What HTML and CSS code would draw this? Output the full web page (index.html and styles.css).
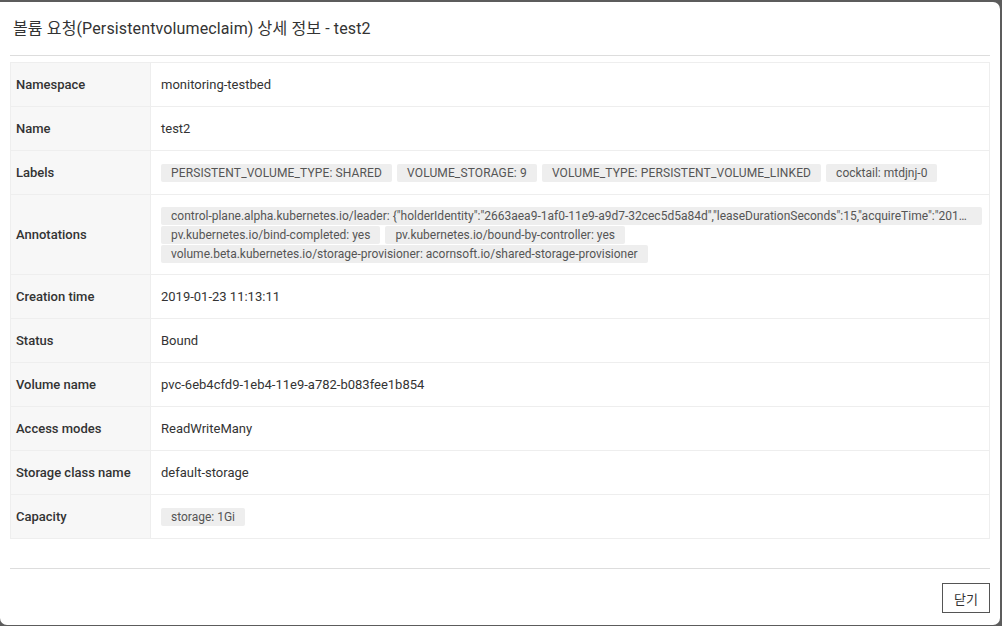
FILE: index.html
```html
<!DOCTYPE html>
<html lang="ko">
<head>
<meta charset="utf-8">
<link rel="stylesheet" href="styles.css">
</head>
<body>
<div class="backdrop">
  <div class="modal">
    <div class="modal-header">볼륨 요청(Persistentvolumeclaim) 상세 정보 - test2</div>
    <div class="modal-body">
      <div class="detail">
        <div class="row"><div class="th">Namespace</div><div class="td">monitoring-testbed</div></div>
        <div class="row"><div class="th">Name</div><div class="td">test2</div></div>
        <div class="row"><div class="th">Labels</div><div class="td tags">
          <span class="tag caps">PERSISTENT_VOLUME_TYPE: SHARED</span><span class="tag caps">VOLUME_STORAGE: 9</span><span class="tag caps">VOLUME_TYPE: PERSISTENT_VOLUME_LINKED</span><span class="tag">cocktail: mtdjnj-0</span>
        </div></div>
        <div class="row tall"><div class="th">Annotations</div><div class="td tags stack">
          <span class="tag ellip">control-plane.alpha.kubernetes.io/leader: {"holderIdentity":"2663aea9-1af0-11e9-a9d7-32cec5d5a84d","leaseDurationSeconds":15,"acquireTime":"2019-01-23T02:13:11Z","renewTime":"2019-01-23T02:13:13Z","leaderTransitions":0}</span>
          <div class="tagline"><span class="tag">pv.kubernetes.io/bind-completed: yes</span><span class="tag">pv.kubernetes.io/bound-by-controller: yes</span></div>
          <div class="tagline"><span class="tag">volume.beta.kubernetes.io/storage-provisioner: acornsoft.io/shared-storage-provisioner</span></div>
        </div></div>
        <div class="row"><div class="th">Creation time</div><div class="td">2019-01-23 11:13:11</div></div>
        <div class="row"><div class="th">Status</div><div class="td">Bound</div></div>
        <div class="row"><div class="th">Volume name</div><div class="td">pvc-6eb4cfd9-1eb4-11e9-a782-b083fee1b854</div></div>
        <div class="row"><div class="th">Access modes</div><div class="td">ReadWriteMany</div></div>
        <div class="row"><div class="th">Storage class name</div><div class="td">default-storage</div></div>
        <div class="row"><div class="th">Capacity</div><div class="td tags"><span class="tag">storage: 1Gi</span></div></div>
      </div>
    </div>
    <div class="modal-footer"><button class="btn">닫기</button></div>
  </div>
</div>
</body>
</html>
```

FILE: styles.css
```css
html, body {
  margin: 0;
  padding: 0;
  height: 100%;
}
body {
  background: #5c5c5c;
  font-family: Roboto, "Noto Sans CJK KR", sans-serif;
  color: #333;
  font-size: 13px;
}
.backdrop {
  padding: 2px 2px 1px 0;
  height: 100%;
  box-sizing: border-box;
}
.modal {
  background: #fff;
  border-radius: 0 7px 7px 7px;
  height: 100%;
  display: flex;
  flex-direction: column;
  padding: 0 10px 0 10px;
  box-sizing: border-box;
}
.modal-header {
  height: 53px;
  line-height: 54px;
  font-size: 16px;
  letter-spacing: 0.13px;
  color: #333;
  padding-left: 3px;
  border-bottom: 1px solid #ddd;
  flex: none;
}
.modal-body {
  padding-top: 6px;
  flex: none;
}
.detail {
  border: 1px solid #eee;
  border-bottom: none;
}
.row {
  display: flex;
  height: 44px;
  border-bottom: 1px solid #eee;
  box-sizing: border-box;
}
.row.tall {
  height: 80px;
}
.th {
  width: 140px;
  flex: none;
  background: #f7f7f7;
  border-right: 1px solid #eee;
  box-sizing: border-box;
  padding-left: 5px;
  display: flex;
  align-items: center;
  font-weight: 500;
  color: #333;
}
.td {
  flex: 1;
  min-width: 0;
  padding: 0 7px 0 10px;
  display: flex;
  align-items: center;
  color: #333;
}
.tags {
  flex-wrap: wrap;
}
.stack {
  flex-direction: column;
  align-items: flex-start;
  justify-content: center;
  gap: 1px;
}
.tagline {
  display: flex;
}
.tag {
  display: inline-block;
  background: #eee;
  color: #555;
  font-size: 12px;
  line-height: 18px;
  height: 18px;
  padding: 0 10px;
  margin-right: 5px;
  border-radius: 2px;
  white-space: nowrap;
}
.tag.caps {
  letter-spacing: 0.13px;
}
.ellip {
  max-width: 100%;
  overflow: hidden;
  text-overflow: ellipsis;
  box-sizing: border-box;
  margin-right: 0;
}
.modal-footer {
  margin-top: 29px;
  border-top: 1px solid #ddd;
  display: flex;
  justify-content: flex-end;
  padding-top: 14px;
}
.btn {
  font-family: "Noto Sans CJK KR", sans-serif;
  font-size: 13px;
  color: #333;
  background: #fff;
  border: 1px solid #555;
  width: 48px;
  height: 30px;
  padding: 0;
  border-radius: 0;
  margin-right: 0;
}
```
